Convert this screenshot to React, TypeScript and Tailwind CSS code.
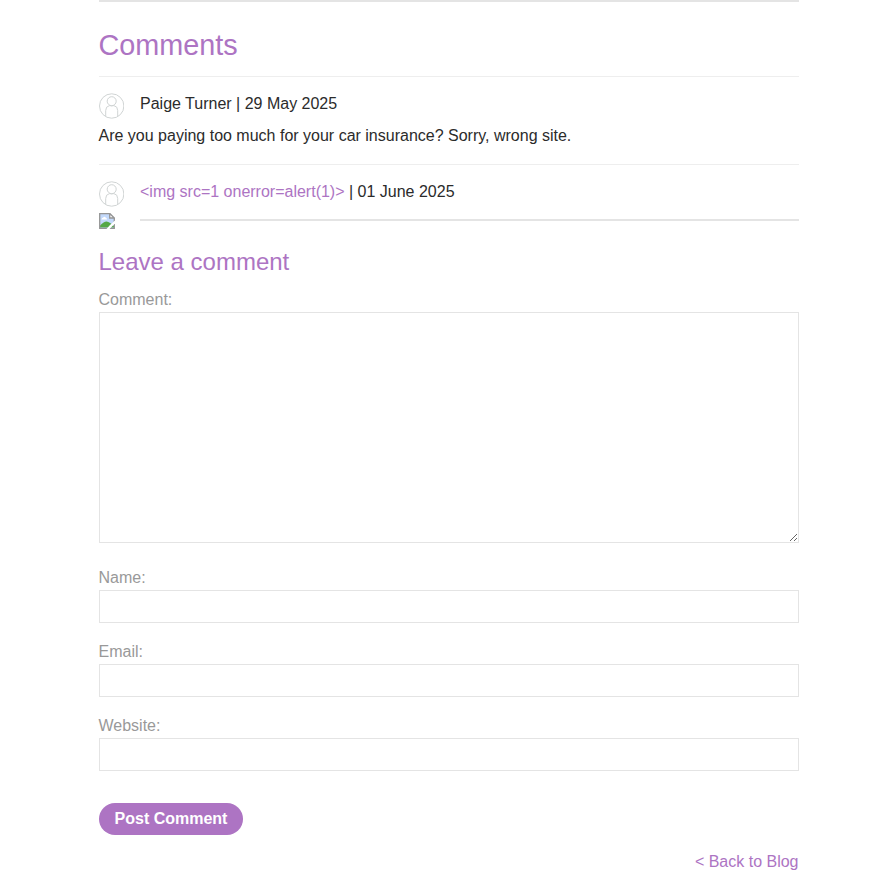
import React from "react";

function Avatar() {
  return (
    <svg className="mr-4 h-[26px] w-[25.5px] shrink-0" viewBox="0 0 25.5 26" fill="none" stroke="#d0d4d4" strokeWidth="1">
      <circle cx="12.7" cy="13" r="12.2" />
      <circle cx="12.7" cy="8.2" r="4.5" />
      <path d="M6.7 23.5V17.5Q6.7 13.3 10.5 12.6Q12.7 13.1 14.9 12.6Q18.7 13.3 18.7 17.5V23.5" />
    </svg>
  );
}

function BrokenImage() {
  return (
    <svg className="h-4 w-4 shrink-0" viewBox="0 0 16 16">
      <path d="M.5.5H11L15.5 5V15.5H.5Z" fill="#c3d9fb" />
      <path d="M2.5 6.5Q2.5 4.8 4.2 4.5Q5.5 3 6.6 4.5Q8 5 8 6.5Z" fill="#fff" />
      <path d="M1 14.5V12.5Q5 8.5 7.5 8.5Q11 9 15 13V14.5Z" fill="#55a846" />
      <path d="M11 1V5H15Z" fill="#fff" />
      <path d="M15.3 5V15.3H.7V.7H11L15.3 5H10.7V.7" fill="none" stroke="#959595" strokeWidth="1.3" />
      <path d="M7.5 16L11 12L16 7.5V10.5L10.5 16Z" fill="#fff" />
    </svg>
  );
}

function Field({ label }: { label: string }) {
  return (
    <label className="mb-[17px] block h-[57px]">
      <span className="block h-6">{label}</span>
      <input className="block h-[33px] w-full border border-[#e4e4e4] px-2 outline-none" />
    </label>
  );
}

export default function App() {
  return (
    <main className="h-[895px] overflow-hidden bg-white font-['Liberation_Sans',Arial,sans-serif] text-base leading-6 text-[#2b2b2b]">
      <div className="ml-[98.5px] w-[700px]">
        <div className="h-[2px] bg-[#e4e4e4]" />
        <h1 className="flex h-[75px] items-center border-b border-[#eee] pt-[12px] text-[28.8px] leading-9 text-[#ad74c3]">Comments</h1>
        <section className="h-[88px] border-b border-[#eee] pt-4">
          <div className="flex h-[31px]">
            <Avatar />
            <p className="-mt-[1px]">Paige Turner | 29 May 2025</p>
          </div>
          <p>Are you paying too much for your car insurance? Sorry, wrong site.</p>
        </section>
        <section className="pt-4">
          <div className="flex h-8">
            <Avatar />
            <p className="-mt-[1px]"><a className="text-[#ad74c3]">&lt;img src=1 onerror=alert(1)&gt;</a> | 01 June 2025</p>
          </div>
          <div className="flex h-4 items-start">
            <BrokenImage />
            <div className="ml-[25px] mt-[6px] h-[2px] flex-1 bg-[#e4e4e4]" />
          </div>
        </section>
        <form className="pt-[17px] text-[#999]">
          <h2 className="mb-3 h-[30px] text-2xl leading-[32px] text-[#ad74c3]">Leave a comment</h2>
          <label className="mb-[22px] block h-[256px]">
            <span className="block h-6">Comment:</span>
            <textarea className="block h-[231px] w-full resize border border-[#e4e4e4] outline-none" />
          </label>
          <Field label="Name:" />
          <Field label="Email:" />
          <Field label="Website:" />
          <button type="button" className="mt-8 block h-8 w-36 rounded-full bg-[#ad74c3] pl-px font-bold leading-8 text-white">Post Comment</button>
        </form>
        <div className="mt-[15px] text-right"><a className="text-[#ad74c3]">&lt; Back to Blog</a></div>
      </div>
    </main>
  );
}
